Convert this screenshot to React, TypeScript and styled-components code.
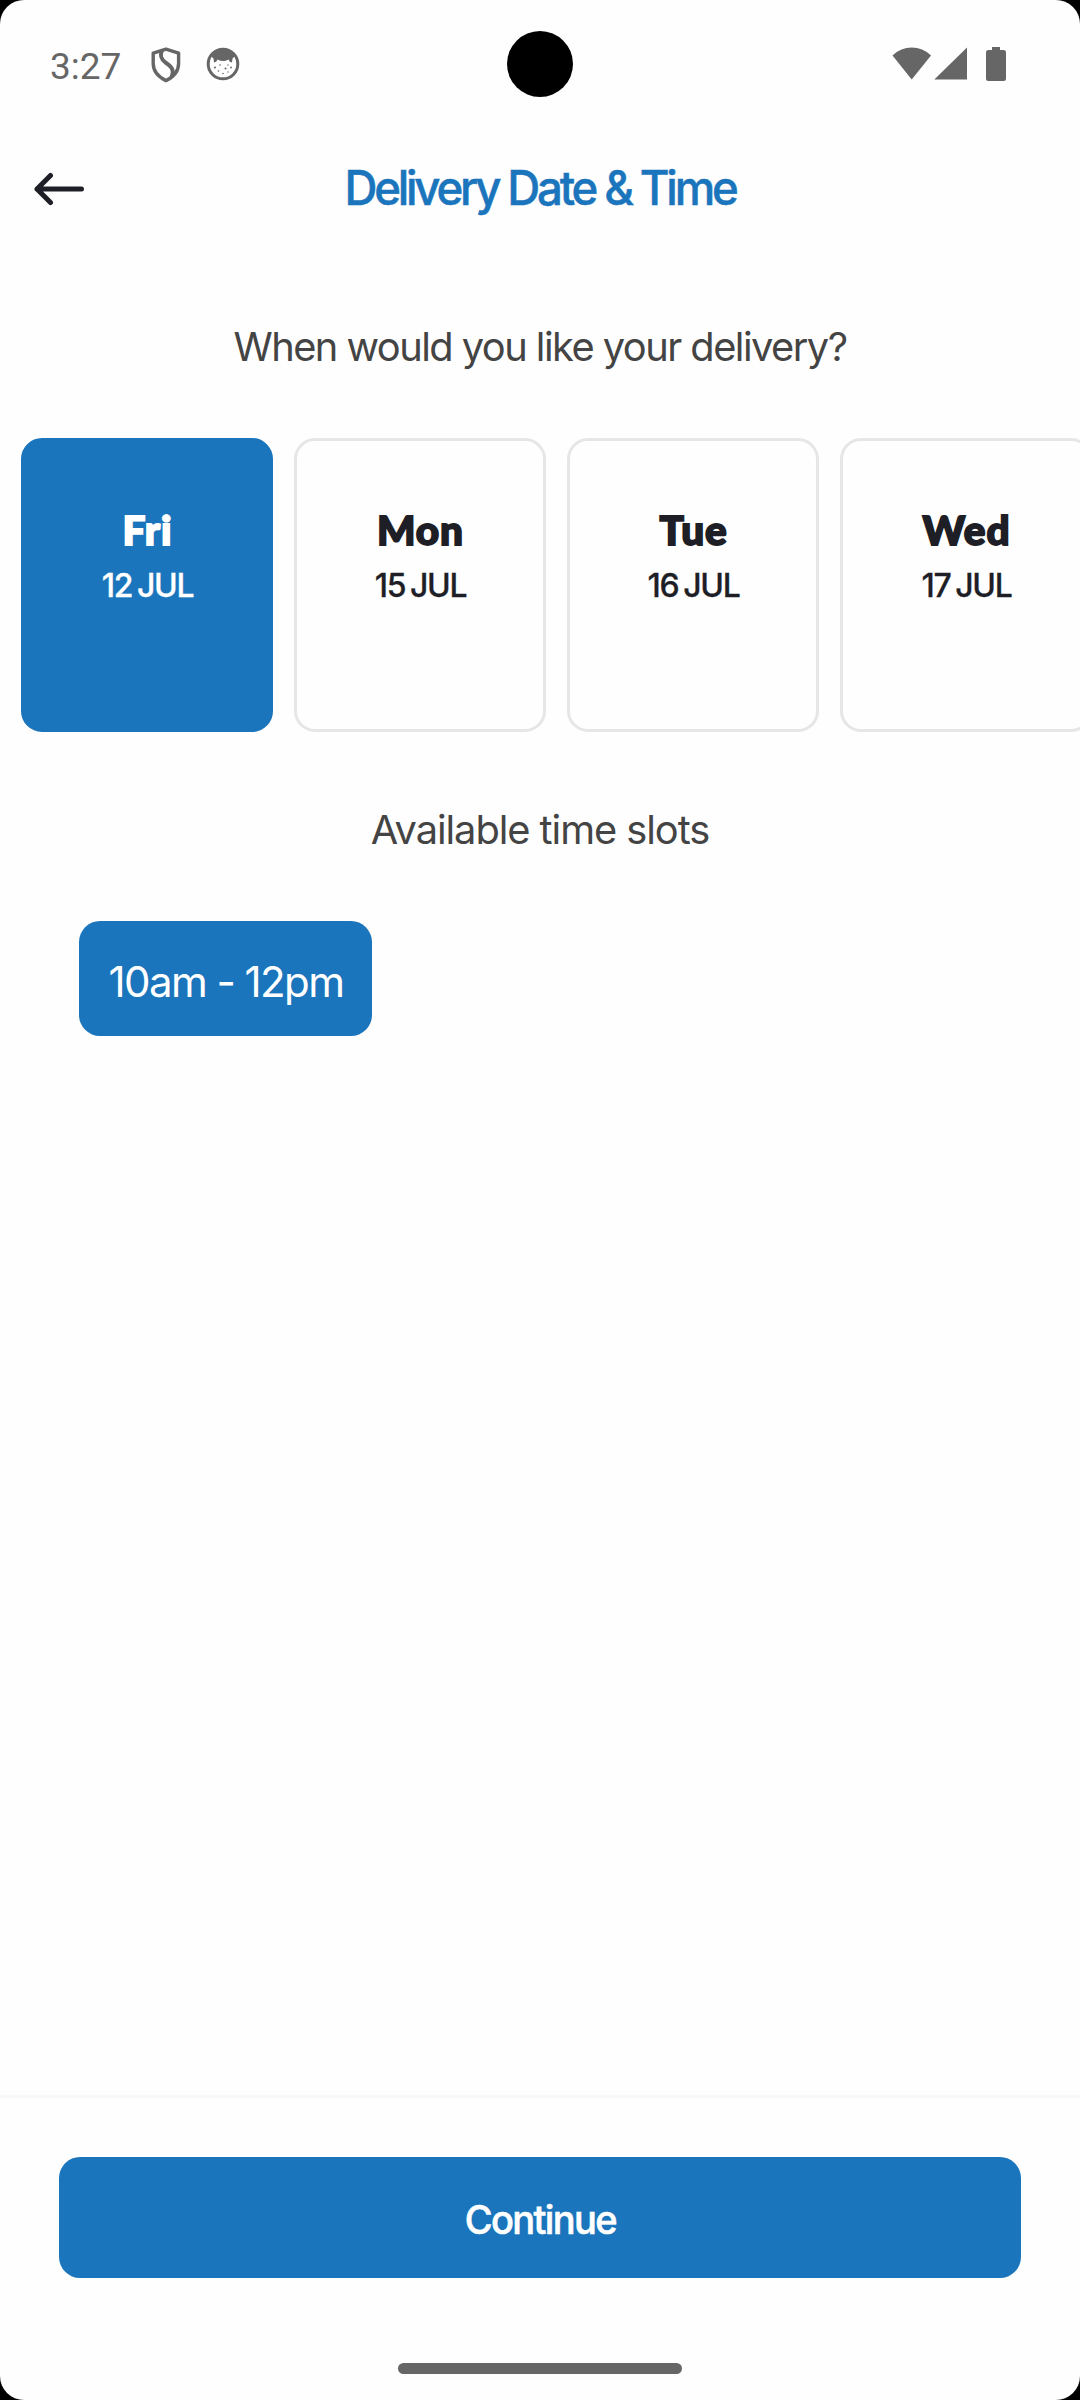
import React from "react";
import styled, { createGlobalStyle } from "styled-components";

const BLUE = "#1b75bc";
const INK = "#1e1e26";
const STATUS = "#666666";

const GlobalStyle = createGlobalStyle`
  * { box-sizing: border-box; }
  html, body { margin: 0; padding: 0; background: #000; }
  button { border: 0; margin: 0; padding: 0; background: none; font: inherit; }
`;

const Screen = styled.div`
  width: 1080px;
  height: 2400px;
  display: flex;
  flex-direction: column;
  overflow: hidden;
  border-radius: 24px;
  background: #fefefe;
  font-family: Inter, "Liberation Sans", sans-serif;
`;

const StatusBar = styled.div`
  height: 128px;
  flex: none;
  display: grid;
  grid-template-columns: 1fr 66px 1fr;
  align-items: center;
`;

const StatusLeft = styled.div`
  display: flex;
  align-items: center;
  padding: 3px 0 0 50px;
`;

const Clock = styled.span`
  width: 74px;
  padding-top: 2px;
  font: 400 37px/44px Roboto, sans-serif;
  color: ${STATUS};
`;

const ShieldIcon = styled.svg`
  width: 30px;
  height: 36px;
  margin: -1px 0 0 27px;
`;

const FaceIcon = styled.svg`
  width: 34px;
  height: 34px;
  margin: -3px 0 0 25px;
`;

const Camera = styled.div`
  width: 66px;
  height: 66px;
  border-radius: 50%;
  background: #000;
`;

const StatusRight = styled.div`
  display: flex;
  justify-content: flex-end;
  padding-right: 74px;
`;

const SignalIcons = styled.svg`
  width: 114px;
  height: 36px;
`;

const Header = styled.header`
  height: 121px;
  flex: none;
  display: grid;
  grid-template-columns: 120px 1fr 120px;
  align-items: center;
`;

const BackButton = styled.button`
  display: flex;
  padding-left: 33px;
`;

const BackIcon = styled.svg`
  width: 52px;
  height: 34px;
`;

const Title = styled.h1`
  margin: 0 0 2px;
  text-align: center;
  white-space: nowrap;
  font-size: 47.25px;
  line-height: 56px;
  font-weight: 500;
  letter-spacing: -3.3px;
  -webkit-text-stroke: 0.5px currentColor;
  transform: scaleX(0.965);
  color: ${BLUE};
`;

const Content = styled.main`
  flex: 1;
  display: flex;
  flex-direction: column;
`;

const Prompt = styled.h2<{ $tracking: number }>`
  margin: 74px 0 67px;
  text-align: center;
  font-size: 39.8px;
  line-height: 48px;
  font-weight: 400;
  letter-spacing: ${(p) => p.$tracking}px;
  color: #444444;
`;

const DayStrip = styled.div`
  display: flex;
  gap: 21px;
  padding-left: 21px;
  overflow: hidden;
`;

const DayCard = styled.button<{ $selected: boolean }>`
  flex: none;
  width: 252px;
  height: 294px;
  display: flex;
  flex-direction: column;
  align-items: center;
  justify-content: flex-start;
  padding: 61px 0 0 1px;
  border-radius: 21px;
  border: 3px solid ${(p) => (p.$selected ? BLUE : "#e6e6e6")};
  background: ${(p) => (p.$selected ? BLUE : "#fefefe")};
  color: ${(p) => (p.$selected ? "#ffffff" : INK)};
`;

const DayName = styled.span`
  font: 900 40.5px/56px Lato, sans-serif;
  letter-spacing: 0.9px;
  -webkit-text-stroke: 1.8px currentColor;
`;

const DayDate = styled.span`
  margin-top: 9px;
  font-size: 32px;
  line-height: 38px;
  font-weight: 500;
  letter-spacing: -1.3px;
  word-spacing: -2.4px;
  -webkit-text-stroke: 0.3px currentColor;
`;

const SlotList = styled.div`
  display: flex;
  padding: 0 79px;
`;

const Slot = styled.button`
  width: 293px;
  height: 115px;
  padding: 5px 0 0 1px;
  border-radius: 21px;
  background: ${BLUE};
  color: #ffffff;
  font-size: 42px;
  font-weight: 400;
  letter-spacing: -1.55px;
  white-space: nowrap;
`;

const Footer = styled.footer`
  height: 305px;
  flex: none;
  display: flex;
  flex-direction: column;
  align-items: center;
  padding: 59px 59px 0;
  border-top: 3px solid #f8f8f8;
`;

const ContinueButton = styled.button`
  width: 962px;
  height: 121px;
  flex: none;
  display: flex;
  align-items: center;
  justify-content: center;
  padding-top: 5px;
  border-radius: 21px;
  background: ${BLUE};
  color: #ffffff;
`;

const ContinueLabel = styled.span`
  font-size: 39.4px;
  font-weight: 500;
  letter-spacing: -1.7px;
  -webkit-text-stroke: 0.6px currentColor;
  transform: scaleX(0.965);
`;

const HomeBar = styled.div`
  width: 284px;
  height: 11px;
  margin-top: 85px;
  border-radius: 6px;
  background: ${STATUS};
`;

const days = [
  { name: "Fri", date: "12 JUL" },
  { name: "Mon", date: "15 JUL" },
  { name: "Tue", date: "16 JUL" },
  { name: "Wed", date: "17 JUL" },
];

export default function App() {
  return (
    <>
      <GlobalStyle />
      <Screen>
        <StatusBar>
          <StatusLeft>
            <Clock>3:27</Clock>
            <ShieldIcon viewBox="0 0 30 36" fill="none" stroke={STATUS} strokeWidth="3.4" strokeLinejoin="round">
              <path d="M15 2.2 27.6 6.2V16.5C27.6 24.5 22.5 30 15 33.6 7.500 30 2.200 24.500 2.200 16.500V6.200Z" />
              <path d="M11 3.500C8.500 9 10 12 14.500 15.500 21 20 23.500 23 20.500 30" strokeWidth="4" />
            </ShieldIcon>
            <FaceIcon viewBox="0 0 34 34">
              <circle cx="17" cy="17" r="14.800" fill="none" stroke={STATUS} strokeWidth="3" />
              <path fill={STATUS} d="M4.500 8.500C10 0 24 0 29.500 8.500L26.500 11.500 26 15.500 23.800 14.800 22.500 12.500Q17 15.500 11.500 12.500L10.200 14.800 8 15.500 7.500 11.500Z" />
              <g fill={STATUS}>
                <circle cx="9" cy="20.500" r="1" />
                <circle cx="14" cy="18" r=".8" />
                <circle cx="19.500" cy="21.500" r="1" />
                <circle cx="25" cy="20.500" r=".9" />
                <circle cx="12.500" cy="24" r=".8" />
                <circle cx="17" cy="26.500" r=".8" />
                <circle cx="22" cy="18" r=".7" />
                <circle cx="22" cy="25" r=".7" />
              </g>
            </FaceIcon>
          </StatusLeft>
          <Camera />
          <StatusRight>
            <SignalIcons viewBox="0 0 114 36" fill={STATUS}>
              <path d="M.5 9.500C11 -1.200 28.500 -1.200 39 9.500L19.700 33.500Z" />
              <path d="M42.300 33.500H75V1.500Z" />
              <path d="M100 1H108V4H111.500Q114 4 114 6.500V32.500Q114 35 111.500 35H96.500Q94 35 94 32.500V6.500Q94 4 96.500 4H100Z" />
            </SignalIcons>
          </StatusRight>
        </StatusBar>

        <Header>
          <BackButton aria-label="Back">
            <BackIcon viewBox="0 0 52 34" fill="none" stroke={INK} strokeWidth="5" strokeLinecap="round" strokeLinejoin="round">
              <path d="M48.500 17H4M17.500 3.500 4 17 17.500 30.500" />
            </BackIcon>
          </BackButton>
          <Title>Delivery Date &amp; Time</Title>
        </Header>

        <Content>
          <Prompt $tracking={-1.53}>When would you like your delivery?</Prompt>
          <DayStrip>
            {days.map((day, i) => (
              <DayCard key={day.date} $selected={i === 0}>
                <DayName>{day.name}</DayName>
                <DayDate>{day.date}</DayDate>
              </DayCard>
            ))}
          </DayStrip>
          <Prompt $tracking={-1.05}>Available time slots</Prompt>
          <SlotList>
            <Slot>10am - 12pm</Slot>
          </SlotList>
        </Content>

        <Footer>
          <ContinueButton>
            <ContinueLabel>Continue</ContinueLabel>
          </ContinueButton>
          <HomeBar />
        </Footer>
      </Screen>
    </>
  );
}
